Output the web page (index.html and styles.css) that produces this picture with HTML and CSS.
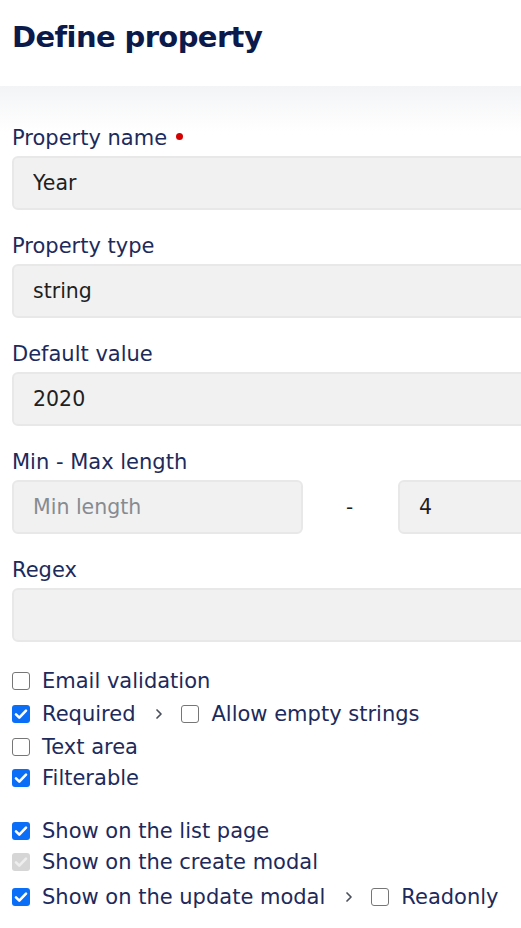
FILE: index.html
```html
<!DOCTYPE html>
<html lang="en">
<head>
<meta charset="utf-8">
<title>Define property</title>
<link rel="stylesheet" href="styles.css">
</head>
<body>
<header class="head">
  <h1 class="title">Define property</h1>
</header>
<main class="form">
  <div class="field">
    <label class="label">Property name <span class="req"></span></label>
    <input class="input" type="text" value="Year" readonly>
  </div>
  <div class="field">
    <label class="label">Property type</label>
    <input class="input" type="text" value="string" readonly>
  </div>
  <div class="field">
    <label class="label">Default value</label>
    <input class="input" type="text" value="2020" readonly>
  </div>
  <div class="field">
    <label class="label">Min - Max length</label>
    <div class="range">
      <input class="input" type="text" placeholder="Min length" readonly>
      <span class="dash">-</span>
      <input class="input" type="text" value="4" readonly>
    </div>
  </div>
  <div class="field">
    <label class="label">Regex</label>
    <input class="input" type="text" readonly>
  </div>

  <div class="checks">
    <div class="row"><span class="box"></span><span class="text">Email validation</span></div>
    <div class="row row-nested">
      <span class="box on"><svg viewBox="0 0 18 18"><path d="M4 9.3l3.3 3.3L14 5.6"/></svg></span><span class="text">Required</span>
      <span class="chev"><svg viewBox="0 0 8 12"><path d="M2 2l4 4-4 4"/></svg></span>
      <span class="box"></span><span class="text">Allow empty strings</span>
    </div>
    <div class="row"><span class="box"></span><span class="text">Text area</span></div>
    <div class="row"><span class="box on"><svg viewBox="0 0 18 18"><path d="M4 9.3l3.3 3.3L14 5.6"/></svg></span><span class="text">Filterable</span></div>
  </div>

  <div class="checks">
    <div class="row"><span class="box on"><svg viewBox="0 0 18 18"><path d="M4 9.3l3.3 3.3L14 5.6"/></svg></span><span class="text">Show on the list page</span></div>
    <div class="row"><span class="box dis"><svg viewBox="0 0 18 18"><path d="M4 9.3l3.3 3.3L14 5.6"/></svg></span><span class="text">Show on the create modal</span></div>
    <div class="row row-nested">
      <span class="box on"><svg viewBox="0 0 18 18"><path d="M4 9.3l3.3 3.3L14 5.6"/></svg></span><span class="text">Show on the update modal</span>
      <span class="chev"><svg viewBox="0 0 8 12"><path d="M2 2l4 4-4 4"/></svg></span>
      <span class="box"></span><span class="text">Readonly</span>
    </div>
  </div>
</main>
</body>
</html>
```

FILE: styles.css
```css
html, body {
  margin: 0;
  padding: 0;
  background: #ffffff;
  overflow: hidden;
}

body {
  font-family: "DejaVu Sans", "Noto Sans", sans-serif;
  color: #1d2a5b;
  width: 521px;
  height: 928px;
}

.head {
  box-sizing: border-box;
  height: 86px;
  padding: 0 12px 12px;
  display: flex;
  align-items: center;
}

.title {
  margin: 0;
  font-size: 29px;
  font-weight: 700;
  color: #0c1a4b;
  letter-spacing: -0.6px;
}

.form {
  width: 677px;
  padding: 38px 12px 0;
  background: linear-gradient(to bottom, #f3f4f6 0, #ffffff 46px) no-repeat;
  background-size: 100% 46px;
  display: flex;
  flex-direction: column;
  gap: 22px;
}

.field {
  display: flex;
  flex-direction: column;
  gap: 4px;
}

.label {
  font-size: 21px;
  line-height: 28px;
  height: 28px;
  display: flex;
  align-items: center;
  gap: 9px;
}

.req {
  width: 7px;
  height: 7px;
  border-radius: 50%;
  background: #d50000;
  margin-top: -3px;
}

.input {
  box-sizing: border-box;
  height: 54px;
  width: 100%;
  margin: 0;
  border: 2px solid #e8e8e8;
  border-radius: 6px;
  background: #f1f1f1;
  padding: 0 0 0 19px;
  font-family: inherit;
  font-size: 20.5px;
  color: #1f1f1f;
  outline: none;
}

.input::placeholder {
  color: #868b92;
}

.range {
  display: grid;
  grid-template-columns: 291px 95px 291px;
}

.dash {
  display: flex;
  align-items: center;
  justify-content: center;
  font-size: 20px;
  color: #1f1f1f;
  padding-right: 2px;
}

.checks {
  display: flex;
  flex-direction: column;
  margin-top: 1px;
}

.checks + .checks {
  margin-top: 0;
}

.row {
  display: flex;
  align-items: center;
  height: 31px;
  font-size: 21px;
}

.row-nested {
  height: 35px;
}

.checks + .checks .row-nested {
  height: 37px;
  padding-top: 2px;
  box-sizing: border-box;
}

.box {
  box-sizing: border-box;
  width: 18px;
  height: 18px;
  flex: none;
  border: 1.5px solid #767676;
  border-radius: 3px;
  background: #fff;
  margin-right: 12px;
  display: flex;
  align-items: center;
  justify-content: center;
}

.box svg {
  width: 18px;
  height: 18px;
  fill: none;
  stroke: #fff;
  stroke-width: 2.6;
  stroke-linecap: round;
  stroke-linejoin: round;
}

.box.on {
  background: #0b6ef7;
  border: none;
}

.box.dis {
  background: #d6d6d6;
  border: none;
}

.box.dis svg {
  stroke: #eeeeee;
}

.text {
  white-space: nowrap;
}

.chev {
  display: flex;
  align-items: center;
  margin: 0 18px 0 20px;
}

.chev svg {
  width: 8px;
  height: 12px;
  fill: none;
  stroke: #4a4f5c;
  stroke-width: 1.7;
  stroke-linecap: round;
  stroke-linejoin: round;
}
```
